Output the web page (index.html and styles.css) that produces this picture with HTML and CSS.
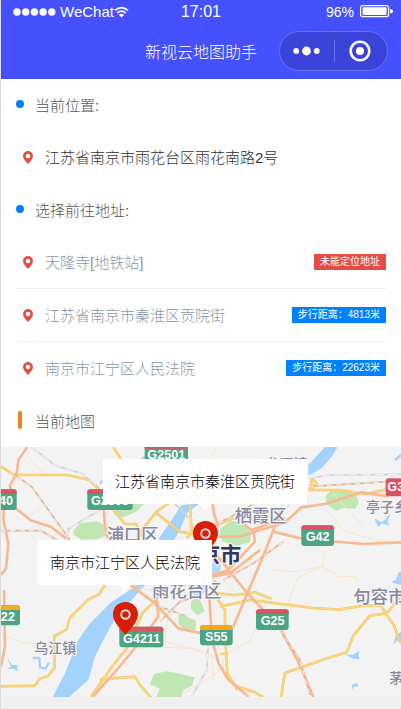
FILE: index.html
```html
<!DOCTYPE html>
<html lang="zh-CN">
<head>
<meta charset="utf-8">
<meta name="viewport" content="width=device-width, initial-scale=1">
<title>新视云地图助手</title>
<link rel="stylesheet" href="styles.css">
</head>
<body>
<svg class="defs" aria-hidden="true">
  <symbol id="pin" viewBox="0 0 10 13"><path fill-rule="evenodd" d="M5 0a5 5 0 0 0-5 5c0 3 2.500 5.300 5 8 2.500-2.700 5-5 5-8a5 5 0 0 0-5-5zm0 2.700a2.300 2.300 0 1 1 0 4.600 2.300 2.300 0 0 1 0-4.600z"/></symbol>
  <symbol id="marker" viewBox="0 0 76 100"><path fill="#d81e06" d="M38 0C16 0 0 16 0 37c0 23 19 39 38 63 19-24 38-40 38-63C76 16 60 0 38 0z"/><circle cx="38" cy="38" r="13" fill="none" stroke="#dcdde2" stroke-width="6"/></symbol>
</svg>
<div class="app">
  <header class="top">
    <div class="status">
      <div class="carrier">
        <svg class="signal" viewBox="0 0 43 8"><circle cx="4" cy="4" r="3.700"/><circle cx="12.700" cy="4" r="3.700"/><circle cx="21.400" cy="4" r="3.700"/><circle cx="30.100" cy="4" r="3.700"/><circle cx="38.800" cy="4" r="3.700"/></svg>
        <span>WeChat</span>
        <svg class="wifi" viewBox="0 0 15 12"><path d="M1 4.400Q7.500-1.200 14 4.400M3.200 6.900q4.300-3.700 8.600 0" fill="none" stroke="#fff" stroke-width="1.700"/><path d="M4.900 8.700q2.600-2 5.200 0L7.500 11.500z" fill="#fff"/></svg>
      </div>
      <time class="clock">17:01</time>
      <div class="power">
        <span>96%</span>
        <svg class="battery" viewBox="0 0 33 13"><rect x=".6" y=".6" width="28" height="11" rx="2" fill="none" stroke="#fff" stroke-width="1.200"/><rect x="2.600" y="2.300" width="24" height="7.600" rx="1" fill="#fff"/><path d="M30 4.200q3 0 3 2t-3 2z" fill="#fff"/></svg>
      </div>
    </div>
    <div class="nav">
      <h1>新视云地图助手</h1>
      <div class="capsule">
        <button type="button" aria-label="更多"><svg class="more" viewBox="0 0 27 10"><circle cx="3.200" cy="5" r="2.900"/><circle cx="13.500" cy="5" r="4.400"/><circle cx="23.800" cy="5" r="2.900"/></svg></button>
        <button type="button" aria-label="关闭"><svg class="close" viewBox="0 0 22 22"><circle cx="11" cy="11" r="9.300" fill="none" stroke="#fff" stroke-width="2.600"/><circle cx="11" cy="11" r="4"/></svg></button>
      </div>
    </div>
  </header>
  <main>
    <section>
      <h2 class="dot">当前位置:</h2>
      <p class="place current"><svg class="pin"><use href="#pin"/></svg><span class="name">江苏省南京市雨花台区雨花南路2号</span></p>
    </section>
    <section>
      <h2 class="dot">选择前往地址:</h2>
      <ul>
        <li class="place"><svg class="pin"><use href="#pin"/></svg><span class="name">天隆寺[地铁站]</span><span class="tag missing">未能定位地址</span></li>
        <li class="place"><svg class="pin"><use href="#pin"/></svg><span class="name">江苏省南京市秦淮区贡院街</span><span class="tag">步行距离：4813米</span></li>
        <li class="place"><svg class="pin"><use href="#pin"/></svg><span class="name">南京市江宁区人民法院</span><span class="tag">步行距离：22623米</span></li>
      </ul>
    </section>
    <section>
      <h2 class="bar">当前地图</h2>
      <div class="map">
        <svg class="tiles" viewBox="3 21 1200 750" preserveAspectRatio="xMidYMid slice">
          <g class="water">
            <path d="M158 771L195 700 235 600 270 550 330 490 390 450 430 410 480 290 515 240 545 195 600 190 560 220 540 270 510 320 440 430 395 480 340 545 305 610 285 650 265 720 240 742 208 771z"/>
            <path d="M925 108L925 75 975 21 1013 21 995 50 965 85z"/>
            <path d="M635 362l22-10 6 30-8 28-22 8zM565 434h62l-20 30-25 3z" opacity=".8"/>
            <path d="M22 655l14 20 16-1v20l-12-8-18 1 10-7zM1125 235l18 12 14-10 14-18-8 26 4 12-20-7-12 10-8-14zM1030 643l28 1 20-12-2 12 3 14-20-2-15-8zM1055 735l15-6 6 9-14 2-4 9zM1175 425l12-5 10-24 6 0v38l-20-4zM1180 615l8-30 15-8v28l-12-4z"/>
          </g>
          <path class="stream" d="M98 654h20l2 28 17 4 10-18M1185 60l18-15M300 130l25-20M405 75l30-25"/>
          <g class="park">
            <path d="M220 272l20-22 50-6 28 14 2 28-32 12-40 2-26-14zM340 192h92l-22 22-40 18-28-8zM662 265l30-22 40 4 22 30-4 30-40 10-42-12-10-22zM976 168l18-18 44 2 30 14 8 20-10 20-36-2-22 8-28-18zM535 525l20-4 10 12 22 8v28l-24 4-26-18zM573 485l18-14 14 18 8 25-20 12-20-18zM462 702l40-8 30 6 52 12-8 24-26 14-6 21h-76l12-24-30-14z"/>
          </g>
          <g class="minor">
            <path d="M80 40q30 50 60 62M3 580q60 40 160 32M95 225l40-30M910 21l-35 35-50 70M1000 160l90 100M970 200l60 70 90 30 83 5M975 335l-8 45-75 35-27 75M820 390l65 5 82-15 50 30h50l36 90M800 485l-50 120-70 35-30 60-100 60M525 425l25 50-45 40-10 90 140 35 5 80M380 635l70-15 120 5 80 30M630 60l20-39M650 400l60 60 120 30M335 420l50 25 80 5"/>
          </g>
          <g class="road casing">
            <path d="M3 80l40 25h160l65 15 35 35M340 21l25 40M340 210l35 42 33 0 18 38M410 290l60-75 35-25M470 220l70 55 40 7 120-47M570 195l5 80-15 20M315 435l-18 28-32 15-55 55-10 35-37 20 1 95-20 25-25 8-15 21-106 2M470 480l-40 35-30 65-20 45-40 50-68 96M300 718l105-8 15 25 35 40M660 500l90-20 78 10 110 14 80 5 75-13 50 2 40 60 15 45 15 10 5 120 35 75M1110 527l50-7 43-50M1110 527l-50 60-20 50-65 20-120 42-12 72M650 460l55 5 60-8 50 20M645 420l-5 40 35 50v70l7 120 30 50M662 642h23M700 735l60 20 30 16M925 150l95 0 78 12 65-15M936 115l14 15-20 20z"/>
          </g>
          <g class="road">
            <path d="M3 80l40 25h160l65 15 35 35M340 21l25 40M340 210l35 42 33 0 18 38M410 290l60-75 35-25M470 220l70 55 40 7 120-47M570 195l5 80-15 20M315 435l-18 28-32 15-55 55-10 35-37 20 1 95-20 25-25 8-15 21-106 2M470 480l-40 35-30 65-20 45-40 50-68 96M300 718l105-8 15 25 35 40M660 500l90-20 78 10 110 14 80 5 75-13 50 2 40 60 15 45 15 10 5 120 35 75M1110 527l50-7 43-50M1110 527l-50 60-20 50-65 20-120 42-12 72M650 460l55 5 60-8 50 20M645 420l-5 40 35 50v70l7 120 30 50M662 642h23M700 735l60 20 30 16M925 150l95 0 78 12 65-15M936 115l14 15-20 20z"/>
          </g>
          <g class="highway">
            <path d="M82 21l-27 40-5 40-20 35 12 65 50 40 62 20 52 40M12 190l-2 50 15 70-7 75-15 20M12 450l3 170-12 60M310 195l5 60 8 40M655 260l-12-35-5-33M655 290l65 0 55-18 80-25 50-45 70-10 110-35 80 12M845 205l-50 130-95 225M650 345l80 100 110 120 60 110 40 96M760 270l5 35-80 85-60 20M845 192l35-50 30-15M820 275l90 22 180 15 113-5M715 240l40 30 100-35M628 470l8 130 20 70 30 50 60 50M385 430l80 60 70 75 70 15M470 470l5 60-75 100-50 60-72 81M630 410l60-10 90-70"/>
          </g>
          <g class="rail">
            <path d="M95 21l70 55 80 25 50 40M340 192l-70 35-65 40-5 35M625 600l-5 90-45 80M525 192l40 40M870 192l-25 28-25 15M925 115l60-10 218-2"/>
          </g>
          <path class="rail white" d="M95 21l70 55 80 25 50 40M340 192l-70 35-65 40-5 35M625 600l-5 90-45 80M870 192l-25 28-25 15M925 115l60-10 218-2"/>
          <g class="track"><path d="M30 95l65 45 115 160M3 272l120 0 70 40M655 250l75-40 30-18M480 545l60-60 50-15M925 140l240-15M840 570l60 90 30 105M450 490l100 35M670 420l90-50 90-65"/></g>
          <path class="track white" d="M30 95l65 45 115 160M3 272l120 0 70 40M655 250l75-40 30-18M480 545l60-60 50-15M925 140l240-15M840 570l60 90 30 105M450 490l100 35M670 420l90-50 90-65"/>
          <g class="label">
            <text x="320" y="302">浦口区</text><text x="704" y="247">栖霞区</text><text x="456" y="471">雨花台区</text><text x="1060" y="489">句容市</text>
          </g>
          <g class="label town">
            <text x="103" y="640">乌江镇</text><text x="1098" y="215">亭子乡</text><text x="1168" y="730">茅山</text><text x="796" y="86">龙潭镇</text>
          </g>
          <text class="city" x="598" y="365">京市</text>
          <g class="shield">
            <g><rect x="434" y="8" width="130" height="60" rx="9"/><path d="M434 26v-9q0-9 9-9h112q9 0 9 9v9z"/><text x="499" y="58">G2501</text></g>
            <g><rect x="-32" y="148" width="82" height="62" rx="9"/><path d="M-32 162v-5q0-9 9-9h64q9 0 9 9v5z"/><text x="3" y="195">G40</text></g>
            <g><rect x="262" y="148" width="136" height="62" rx="9"/><path d="M262 162v-5q0-9 9-9h118q9 0 9 9v5z"/><text x="330" y="195">G2503</text></g>
            <g><rect x="904" y="256" width="98" height="62" rx="9"/><path d="M904 270v-5q0-9 9-9h80q9 0 9 9v5z"/><text x="953" y="304">G42</text></g>
            <g><rect x="768" y="508" width="98" height="62" rx="9"/><path d="M768 522v-5q0-9 9-9h80q9 0 9 9v5z"/><text x="818" y="556">G25</text></g>
            <g><rect x="358" y="560" width="132" height="62" rx="9"/><path d="M358 574v-5q0-9 9-9h114q9 0 9 9v5z"/><text x="425" y="608">G4211</text></g>
            <g class="provincial"><rect x="600" y="556" width="98" height="60" rx="9"/><path d="M600 570v-5q0-9 9-9h80q9 0 9 9v5z"/><text x="649" y="604">S55</text></g>
            <g class="provincial"><rect x="-40" y="496" width="100" height="60" rx="9"/><path d="M-40 510v-5q0-9 9-9h82q9 0 9 9v5z"/><text x="11" y="544">S22</text></g>
            <g class="red"><rect x="1157" y="115" width="98" height="54" rx="9"/><text x="1198" y="154">G36</text></g>
          </g>
        </svg>
        <div class="spot spot-street"><span class="callout">江苏省南京市秦淮区贡院街</span><svg class="marker"><use href="#marker"/></svg></div>
        <div class="spot spot-court"><span class="callout">南京市江宁区人民法院</span><svg class="marker"><use href="#marker"/></svg></div>
      </div>
    </section>
  </main>
</div>
</body>
</html>
```
FILE: styles.css
```css
* { box-sizing: border-box; }
body {
  margin: 0;
  background: #f0f0f0;
  font-family: "Liberation Sans", "Noto Sans CJK SC", sans-serif;
  font-size: 15px;
  font-weight: 300;
}
h1, h2, p, ul { margin: 0; padding: 0; font-weight: inherit; }
ul { list-style: none; }
.defs { display: block; width: 0; height: 0; }
.app { border-left: 1px solid #dcdcdc; min-height: 100vh; }

.top { background: #4550ff; color: #fff; }
.status {
  display: grid;
  grid-template-columns: 1fr auto 1fr;
  align-items: center;
  height: 23px;
  padding: 0 8px;
}
.carrier, .power { display: flex; align-items: center; }
.carrier { padding-left: 4px; }
.power { justify-content: flex-end; gap: 6px; font-size: 14px; }
.signal { width: 43px; height: 8px; fill: #fff; margin-right: 4px; }
.wifi { width: 15px; height: 12px; }
.battery { width: 33px; height: 13px; }
.clock { font-size: 16px; }
.nav {
  display: grid;
  grid-template-columns: 1fr auto 1fr;
  align-items: center;
  height: 56px;
  padding: 0 13px;
}
.nav h1 { grid-column: 2; font-size: 16px; line-height: 24px; margin-top: 4px; }
.capsule {
  justify-self: end;
  display: flex;
  width: 109px;
  height: 40px;
  border: 1px solid #6972e8;
  border-radius: 20px;
  background: #3b44d9;
}
.capsule button {
  flex: 1;
  display: flex;
  align-items: center;
  justify-content: center;
  position: relative;
  padding: 0;
  border: 0;
  background: none;
}
.capsule button + button::before {
  content: "";
  position: absolute;
  left: 0;
  top: 8px;
  bottom: 8px;
  width: 1px;
  background: #6972e8;
}
.more { width: 27px; height: 10px; fill: #fff; }
.close { width: 22px; height: 22px; fill: #fff; }

main { background: #fff; }
h2 {
  display: flex;
  align-items: center;
  height: 52px;
  padding: 0 15px 2px;
  font-size: 15px;
  color: #555;
}
h2::before { content: ""; flex: none; }
.dot::before { width: 8px; height: 8px; margin-right: 11px; border-radius: 50%; background: #0080ff; }
.bar::before { width: 4px; height: 18px; margin: 0 13px 0 2px; border-radius: 2px; background: #fa7d19; }
.place {
  display: flex;
  align-items: center;
  height: 53px;
  margin: 0 15px;
  padding-left: 7px;
  border-bottom: 1px solid transparent;
  color: #8799a3;
}
.place.current { color: #333; }
li.place:not(:last-child) { border-color: #f0f0f0; }
.pin { width: 10px; height: 13px; margin-right: 12px; fill: #e54d42; }
.name { padding-bottom: 2px; }
.tag {
  margin-left: auto;
  padding: 0 6px;
  background: #0081ff;
  color: #fff;
  font-size: 10px;
  font-weight: 400;
  line-height: 16px;
}
.missing { background: #e54d42; }

.map { position: relative; height: 250px; overflow: hidden; background: #f3f3f3; }
.tiles { display: block; width: 100%; height: 100%; }
.tiles path { stroke-linejoin: round; }
.water { fill: #a3d3fa; }
.stream { fill: none; stroke: #a3d3fa; stroke-width: 7; }
.park { fill: #c0e6b4; }
.minor { fill: none; stroke: #f9e6c4; stroke-width: 3; }
.road { fill: none; stroke: #fad67c; stroke-width: 5; }
.road.casing { stroke: #f0c76c; stroke-width: 8; }
.highway { fill: none; stroke: #f9b990; stroke-width: 8; }
.rail { fill: none; stroke: #cdd0d9; stroke-width: 5; }
.rail.white { stroke: #f6f6f8; stroke-width: 3; stroke-dasharray: 28 12; }
.track { fill: none; stroke: #e4b294; stroke-width: 5; }
.track.white { stroke: #fbf3ec; stroke-width: 3; stroke-dasharray: 16 12; }
.label, .city { paint-order: stroke; stroke: #f6f6f6; stroke-width: 6; font-weight: 500; }
.label { fill: #8589a0; font-size: 52px; }
.town { font-size: 42px; }
.city { fill: #333759; font-size: 63px; font-weight: 700; }
.shield { fill: #4ba583; font-size: 38px; font-weight: 700; text-anchor: middle; }
.shield path, .shield .red { fill: #da5360; }
.shield .provincial path { fill: #f6ab1c; }
.shield text { fill: #fff; }

.spot {
  position: absolute;
  display: flex;
  flex-direction: column;
  align-items: center;
  transform: translate(-50%, -100%);
}
.spot-street { left: 51%; top: 107px; }
.spot-court { left: 31%; top: 188px; }
.callout {
  position: relative;
  margin-bottom: 17px;
  padding: 0 12px;
  background: #fff;
  color: #000;
  line-height: 45px;
  white-space: nowrap;
}
.callout::after {
  content: "";
  position: absolute;
  left: 50%;
  top: 100%;
  margin-left: -6px;
  border: 6px solid transparent;
  border-top-color: #fff;
  border-bottom: 0;
}
.marker { width: 25px; height: 33px; }
```
